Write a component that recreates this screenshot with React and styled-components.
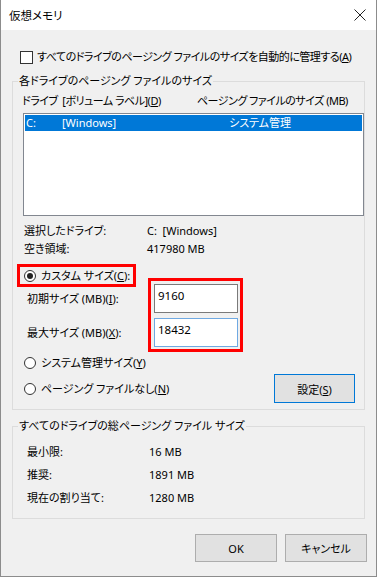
import React from "react";
import styled, { createGlobalStyle } from "styled-components";

const Global = createGlobalStyle`
  html, body { margin: 0; padding: 0; background: #f0f0f0; }
  * { box-sizing: border-box; }
`;

const Window = styled.div`
  width: 377px;
  height: 577px;
  border: 1px solid #8c8c8c;
  border-top: none;
  display: flex;
  flex-direction: column;
  background: #f0f0f0;
  color: #000;
  font-family: "Noto Sans", "Noto Sans CJK JP", sans-serif;
  font-size: 11px;
  font-feature-settings: "palt";
  overflow: hidden;
`;

const TitleBar = styled.div`
  height: 30px;
  flex: none;
  background: #fff;
  display: flex;
  align-items: center;
  justify-content: space-between;
  padding: 0 10px 0 8px;
  font-size: 11.5px;
`;

const Body = styled.div`
  flex: 1;
  display: flex;
  flex-direction: column;
  padding: 0 11px;
`;

const CheckRow = styled.label`
  margin: 20px 0 0 8px;
  height: 14px;
  line-height: 14px;
  display: flex;
  align-items: center;
  gap: 4px;
  white-space: nowrap;
  letter-spacing: -0.5px;
`;

const CheckBox = styled.span`
  width: 13px;
  height: 13px;
  border: 1px solid #333;
  background: #fff;
  flex: none;
`;

const Group = styled.fieldset`
  margin: ${(p) => p.$top}px 0 0;
  padding: 0 0 ${(p) => p.$bottom}px 0;
  border: 1px solid #dcdcdc;
  min-width: 0;
`;

const Legend = styled.legend`
  margin-left: 5px;
  padding: 0 1px;
  line-height: 14px;
  white-space: nowrap;
`;

const HeaderRow = styled.div`
  margin-top: 6px;
  padding-left: 9px;
  height: 14px;
  line-height: 14px;
  display: grid;
  grid-template-columns: 175px 1fr;
  white-space: nowrap;
  letter-spacing: -0.5px;
`;

const ListBox = styled.div`
  margin: 5px 0 0 10px;
  height: 103px;
  border: 1px solid #828790;
  background: #fff;
  padding: 1px 1px;
`;

const ListRow = styled.div`
  height: 16px;
  line-height: 16px;
  padding-left: 1px;
  display: grid;
  grid-template-columns: 36px 167px 1fr;
  background: ${(p) => (p.$selected ? "#0078d7" : "transparent")};
  color: ${(p) => (p.$selected ? "#fff" : "#000")};
  white-space: nowrap;
`;

const InfoRow = styled.div`
  margin-top: ${(p) => p.$top}px;
  padding-left: 11px;
  height: 16px;
  line-height: 16px;
  display: grid;
  grid-template-columns: 123px 1fr;
  white-space: nowrap;
`;

const SizeSection = styled.div`
  margin-top: 7px;
  display: flex;
`;

const LeftCol = styled.div`
  width: 135px;
  flex: none;
  display: flex;
  flex-direction: column;
`;

const RightCol = styled.div`
  flex: 1;
  display: flex;
  flex-direction: column;
  align-items: flex-start;
`;

const RedBox = styled.div`
  border: 3px solid #ff0000;
  align-self: flex-start;
`;

const RadioHighlight = styled(RedBox)`
  margin-left: 4px;
  height: 23px;
  padding: 0 3px 0 4px;
  display: flex;
  align-items: center;
`;

const FieldsHighlight = styled(RedBox)`
  margin-top: 14px;
  width: 95px;
  padding: 3px 2px 2px 3px;
  display: flex;
  flex-direction: column;
  gap: 5px;
`;

const RadioRow = styled.label`
  margin: ${(p) => p.$top || 0}px 0 0 ${(p) => p.$left || 0}px;
  height: 16px;
  line-height: 16px;
  display: flex;
  align-items: center;
  gap: 5px;
  white-space: nowrap;
`;

const Radio = styled.span`
  width: 12px;
  height: 12px;
  border-radius: 50%;
  border: 1px solid #333;
  background: #fff;
  flex: none;
  display: flex;
  align-items: center;
  justify-content: center;
  &::after {
    content: "";
    width: 6px;
    height: 6px;
    border-radius: 50%;
    background: #222;
    display: ${(p) => (p.$checked ? "block" : "none")};
  }
`;

const FieldLabel = styled.div`
  margin: ${(p) => p.$top}px 0 0 14px;
  height: 16px;
  line-height: 16px;
  white-space: nowrap;
`;

const TextBox = styled.div`
  width: 84px;
  height: 29px;
  border: 1px solid ${(p) => (p.$focused ? "#6fa9e2" : "#7a7a7a")};
  background: #fff;
  padding: 3px 0 0 3px;
  line-height: 16px;
  font-size: 11.5px;
`;

const Button = styled.button`
  width: ${(p) => p.$w}px;
  height: ${(p) => p.$h}px;
  margin: 0;
  padding: 0;
  border: 1px solid ${(p) => (p.$default ? "#0078d7" : "#adadad")};
  background: #e1e1e1;
  font: inherit;
  color: #000;
`;

const SettingsButton = styled(Button)`
  align-self: flex-end;
  margin: 22px 9px 0 0;
`;

const TotalRows = styled.div`
  margin-top: 11px;
  display: flex;
  flex-direction: column;
  gap: 7px;
`;

const TotalRow = styled.div`
  padding-left: 14px;
  height: 16px;
  line-height: 16px;
  display: grid;
  grid-template-columns: 122px 1fr;
  white-space: nowrap;
`;

const ButtonRow = styled.div`
  margin: 15px -2px 0 0;
  display: flex;
  justify-content: flex-end;
  gap: 8px;
`;

const CloseIcon = () => (
  <svg width="12" height="12" viewBox="0 0 12 12">
    <path d="M0.5 0.5 L11.5 11.5 M11.5 0.5 L0.5 11.5" stroke="#222" strokeWidth="1" fill="none" />
  </svg>
);

export default function App() {
  return (
    <>
      <Global />
      <Window>
        <TitleBar>
          <span>仮想メモリ</span>
          <CloseIcon />
        </TitleBar>
        <Body>
          <CheckRow>
            <CheckBox />
            <span>
              すべてのドライブのページング ファイルのサイズを自動的に管理する(<u>A</u>)
            </span>
          </CheckRow>

          <Group $top={10} $bottom={6}>
            <Legend>各ドライブのページング ファイルのサイズ</Legend>
            <HeaderRow>
              <span>
                ドライブ&nbsp; [ボリューム ラベル](<u>D</u>)
              </span>
              <span>ページング ファイルのサイズ (MB)</span>
            </HeaderRow>
            <ListBox>
              <ListRow $selected>
                <span>C:</span>
                <span>[Windows]</span>
                <span>システム管理</span>
              </ListRow>
            </ListBox>
            <InfoRow $top={7}>
              <span>選択したドライブ:</span>
              <span>C:&nbsp; [Windows]</span>
            </InfoRow>
            <InfoRow $top={2}>
              <span>空き領域:</span>
              <span>417980 MB</span>
            </InfoRow>
            <SizeSection>
              <LeftCol>
                <RadioHighlight>
                  <RadioRow>
                    <Radio $checked />
                    <span>
                      カスタム サイズ(<u>C</u>):
                    </span>
                  </RadioRow>
                </RadioHighlight>
                <FieldLabel $top={4}>
                  初期サイズ (MB)(<u>I</u>):
                </FieldLabel>
                <FieldLabel $top={18}>
                  最大サイズ (MB)(<u>X</u>):
                </FieldLabel>
                <RadioRow $top={14} $left={11}>
                  <Radio />
                  <span>
                    システム管理サイズ(<u>Y</u>)
                  </span>
                </RadioRow>
                <RadioRow $top={10} $left={11}>
                  <Radio />
                  <span>
                    ページング ファイルなし(<u>N</u>)
                  </span>
                </RadioRow>
              </LeftCol>
              <RightCol>
                <FieldsHighlight>
                  <TextBox>9160</TextBox>
                  <TextBox $focused>18432</TextBox>
                </FieldsHighlight>
                <SettingsButton $w={81} $h={29} $default>
                  設定(<u>S</u>)
                </SettingsButton>
              </RightCol>
            </SizeSection>
          </Group>

          <Group $top={9} $bottom={12}>
            <Legend>すべてのドライブの総ページング ファイル サイズ</Legend>
            <TotalRows>
              <TotalRow>
                <span>最小限:</span>
                <span>16 MB</span>
              </TotalRow>
              <TotalRow>
                <span>推奨:</span>
                <span>1891 MB</span>
              </TotalRow>
              <TotalRow>
                <span>現在の割り当て:</span>
                <span>1280 MB</span>
              </TotalRow>
            </TotalRows>
          </Group>

          <ButtonRow>
            <Button $w={82} $h={28}>OK</Button>
            <Button $w={82} $h={28}>キャンセル</Button>
          </ButtonRow>
        </Body>
      </Window>
    </>
  );
}
